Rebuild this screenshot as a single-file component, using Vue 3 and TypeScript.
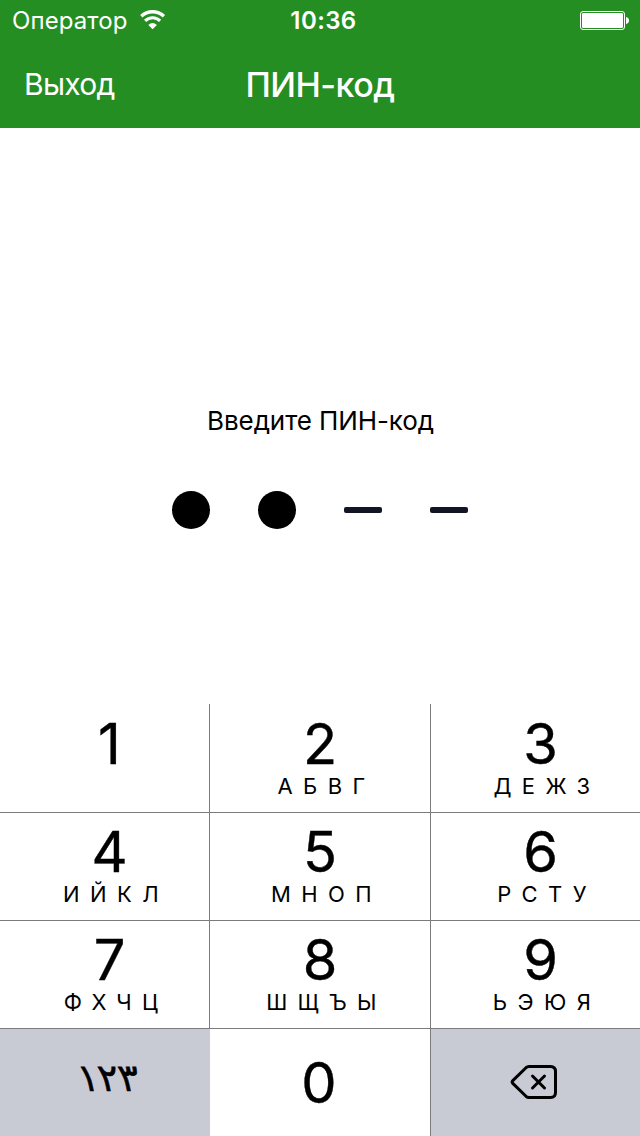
<script setup lang="ts">
interface Key {
  digit: string
  letters: string
}

const keys: Key[] = [
  { digit: '1', letters: '' },
  { digit: '2', letters: 'АБВГ' },
  { digit: '3', letters: 'ДЕЖЗ' },
  { digit: '4', letters: 'ИЙКЛ' },
  { digit: '5', letters: 'МНОП' },
  { digit: '6', letters: 'РСТУ' },
  { digit: '7', letters: 'ФХЧЦ' },
  { digit: '8', letters: 'ШЩЪЫ' },
  { digit: '9', letters: 'ЬЭЮЯ' },
]

const pin: boolean[] = [true, true, false, false]
</script>

<template>
  <div class="screen">
    <header class="top">
      <div class="status">
        <div class="carrier">
          <span>Оператор</span>
          <svg class="wifi" width="26" height="20" viewBox="0 0 26 20">
            <path d="M1.300 6.300A16.300 16.300 0 0 1 23.900 6.300" fill="none" stroke="#fff" stroke-width="3.300" />
            <path d="M5.100 10.800A10.700 10.700 0 0 1 20.100 10.800" fill="none" stroke="#fff" stroke-width="3.100" />
            <path d="M8.300 14.900A6.700 6.700 0 0 1 16.900 14.900L12.600 19.200Z" fill="#fff" />
          </svg>
        </div>
        <span class="clock">10:36</span>
        <svg class="battery" width="50" height="20" viewBox="0 0 50 20">
          <rect x="0.5" y="0.5" width="44" height="18" rx="2.5" fill="none" stroke="#fff" />
          <rect x="2" y="2" width="41" height="15" rx="1.2" fill="#fff" />
          <path d="M46 6c2 .4 3 1.800 3 3.500s-1 3.100-3 3.500z" fill="#fff" />
        </svg>
      </div>
      <nav class="nav">
        <span class="exit">Выход</span>
        <span class="title">ПИН-код</span>
      </nav>
    </header>

    <main class="entry">
      <p class="prompt">Введите ПИН-код</p>
      <div class="slots">
        <span v-for="(filled, i) in pin" :key="i" :class="filled ? 'dot' : 'dash'" />
      </div>
    </main>

    <section class="pad">
      <div v-for="k in keys" :key="k.digit" class="key">
        <span class="digit">{{ k.digit }}</span>
        <span class="letters">{{ k.letters }}</span>
      </div>
      <div class="key grey"><span class="arabic">١٢٣</span></div>
      <div class="key zero"><span class="digit">0</span></div>
      <div class="key grey">
        <svg class="erase" width="48" height="36" viewBox="0 0 48 36">
          <g fill="none" stroke="#000" stroke-width="3" stroke-linecap="round" stroke-linejoin="round">
            <path d="M19 1.500H40.500Q45.500 1.500 45.500 6.500V27.500Q45.500 32.500 40.500 32.500H19Q17.300 32.500 16 31.300L2.800 18.400Q1.500 17 2.800 15.600L16 2.700Q17.300 1.500 19 1.500Z" />
            <path d="M22.500 11L34.500 23M34.500 11L22.500 23" />
          </g>
        </svg>
      </div>
    </section>
  </div>
</template>

<style>
body {
  margin: 0;
}
</style>

<style scoped>
.screen {
  width: 640px;
  height: 1136px;
  display: flex;
  flex-direction: column;
  background: #fff;
  color: #000;
  font-family: Inter, "Liberation Sans", sans-serif;
  overflow: hidden;
}
.top {
  height: 128px;
  background: #258e23;
  color: #fff;
}
.status {
  height: 40px;
  display: grid;
  grid-template-columns: 1fr auto 1fr;
  font-size: 24px;
  line-height: 42px;
}
.carrier {
  display: flex;
  padding-left: 12px;
  letter-spacing: 0.1px;
}
.wifi {
  margin: 10px 0 0 12px;
}
.clock {
  padding-left: 7px;
  font-weight: 600;
  letter-spacing: 0.4px;
}
.battery {
  justify-self: end;
  margin: 11px 10px 0 0;
}
.nav {
  display: grid;
  grid-template-columns: 1fr auto 1fr;
  height: 88px;
  line-height: 89px;
}
.exit {
  padding-left: 24px;
  font-size: 30px;
  letter-spacing: -0.7px;
}
.title {
  font-size: 34px;
  font-weight: 500;
  letter-spacing: -0.5px;
}
.entry {
  height: 576px;
  display: flex;
  flex-direction: column;
  align-items: center;
}
.prompt {
  margin: 273px 0 0 1px;
  font-size: 26px;
  line-height: 40px;
  letter-spacing: -0.1px;
}
.slots {
  display: flex;
  align-items: center;
  gap: 48px;
  margin-top: 50px;
}
.dot {
  width: 38px;
  height: 38px;
  border-radius: 50%;
  background: #000;
}
.dash {
  width: 38px;
  height: 6px;
  border-radius: 2px;
  background: #121624;
}
.pad {
  display: grid;
  grid-template-columns: 210px 221px 209px;
  grid-template-rows: 109px 108px 108px 107px;
}
.key {
  box-sizing: border-box;
  display: flex;
  flex-direction: column;
  align-items: center;
  border-right: 1px solid #7b7b7b;
  border-bottom: 1px solid #7b7b7b;
}
.key:nth-child(3n + 1) {
  padding-left: 10px;
}
.key:nth-child(3n) {
  padding-left: 10px;
  border-right: 0;
}
.digit {
  margin-top: 12px;
  font-size: 56px;
  line-height: 56px;
  -webkit-text-stroke: 0.4px #000;
}
.key:nth-child(n + 4) .digit {
  margin-top: 11px;
}
.letters {
  margin: 0 -13px 0 0;
  font-size: 22px;
  line-height: 28px;
  letter-spacing: 10.4px;
}
.key:nth-child(n + 10) {
  border-bottom: 0;
}
.key.zero .digit {
  margin: 26px 2px 0 0;
}
.key.grey {
  background: #c8cad4;
}
.key.grey:nth-child(10) {
  border-right: 0;
}
.arabic {
  margin: 21px 2px 0 0;
  font-family: "DejaVu Sans", sans-serif;
  font-size: 38px;
  line-height: 56px;
  letter-spacing: 2px;
  transform: skewX(11deg);
  -webkit-text-stroke: 0.6px #000;
}
.erase {
  margin: 36px 13px 0 0;
}
</style>
